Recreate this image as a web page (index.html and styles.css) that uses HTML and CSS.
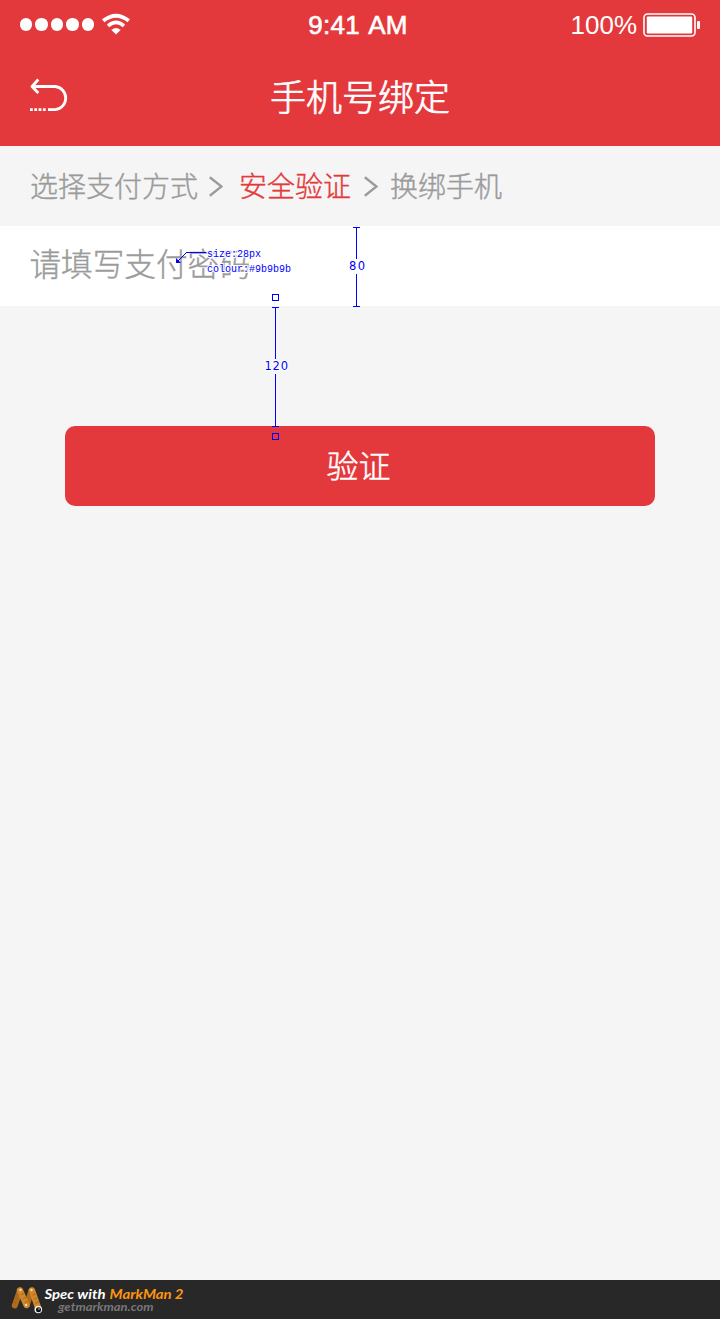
FILE: index.html
```html
<!DOCTYPE html>
<html lang="zh-CN">
<head>
<meta charset="utf-8">
<title>手机号绑定</title>
<link rel="stylesheet" href="styles.css">
</head>
<body>
<div class="screen">
  <header class="header">
    <div class="status">
      <div class="signal">
        <i class="dot"></i><i class="dot"></i><i class="dot"></i><i class="dot"></i><i class="dot"></i>
        <svg class="wifi" width="30" height="22" viewBox="0 0 30 22">
          <path d="M2.2 7.8Q15-2.4 27.8 7.8" fill="none" stroke="#fff" stroke-width="3.8"/>
          <path d="M7 12.8Q15 6.1 23 12.8" fill="none" stroke="#fff" stroke-width="3.6"/>
          <path d="M10.4 17Q15 13 19.6 17L15 21.500Z" fill="#fff"/>
        </svg>
      </div>
      <div class="clock">9:41 AM</div>
      <div class="power">
        <span class="percent">100%</span>
        <svg width="58" height="24" viewBox="0 0 58 24">
          <rect x="1" y="1" width="51" height="22" rx="3.5" fill="none" stroke="#fff" stroke-width="1.6"/>
          <rect x="3.8" y="3.6" width="45.4" height="16.8" rx="1" fill="#fff"/>
          <rect x="54" y="8" width="3" height="8" rx="1" fill="#fff"/>
        </svg>
      </div>
    </div>
    <nav class="navbar">
      <svg class="back" width="40" height="34" viewBox="0 0 40 34" fill="none" stroke="#fff" stroke-width="2.8">
        <path d="M8.3 1.5L2 8.5L8.3 15M2 8.5H25.200A11.6 11.6 0 0 1 25.200 31.6H18" stroke-linejoin="round"/>
        <path d="M0 31.6H17" stroke-dasharray="2.8 1.5"/>
      </svg>
      <h1 class="title">手机号绑定</h1>
    </nav>
  </header>
  <div class="steps">
    <span class="step">选择支付方式</span>
    <svg class="sep" width="14" height="21" viewBox="0 0 14 21"><path d="M.8 1.3L12.500 10.5L.8 19.7"/></svg>
    <span class="step current">安全验证</span>
    <svg class="sep late" width="14" height="21" viewBox="0 0 14 21"><path d="M.8 1.3L12.500 10.5L.8 19.7"/></svg>
    <span class="step">换绑手机</span>
  </div>
  <div class="field">请填写支付密码</div>
  <main class="content"><button class="submit">验证</button></main>
  <footer class="footer">
    <svg width="34" height="30" viewBox="0 0 34 30" fill="none" stroke-linecap="round">
      <path d="M4.800 20.500L10 5.500M17 19.500L21.500 5.500" stroke="#b06c1c" stroke-width="6"/>
      <path d="M10 5.500L16.500 20M22 5.500L28 22.500" stroke="#d0872b" stroke-width="6.4"/>
      <path d="M3.500 17L6 18M5 13L7.500 14M6.500 9L9 10M11.500 9.500L14 8.500M13.500 13.500L16 12.500M15 17.500L17.500 16.500M23 10L25.500 9M24.500 14L27 13M26 18L28.500 17" stroke="#9c5d18" stroke-width=".8"/>
      <circle cx="10.500" cy="5" r="1.2" fill="#ffe0a0"/><circle cx="21.500" cy="5" r="1.2" fill="#ffe0a0"/><circle cx="16" cy="20" r="1.2" fill="#ffe0a0"/>
      <circle cx="28.300" cy="24.500" r="3.8" fill="#eee"/><circle cx="28.500" cy="24.800" r="2.5" fill="#111"/><circle cx="29" cy="24" r=".7" fill="#fff"/>
    </svg>
    <div class="credit">
      <div class="brand"><svg width="140" height="15"><text x="0.500" y="12.500" textLength="61" lengthAdjust="spacingAndGlyphs" fill="#fff">Spec with</text><text x="65.500" y="12.500" textLength="74" lengthAdjust="spacingAndGlyphs" fill="#ff9410">MarkMan 2</text></svg></div>
      <div class="site"><svg width="110" height="13"><text x="0" y="10.500" textLength="95.500" lengthAdjust="spacingAndGlyphs" fill="#777">getmarkman.com</text></svg></div>
    </div>
  </footer>
  <svg class="marks" width="720" height="520" viewBox="0 0 720 520">
    <g fill="none" stroke="#00f" shape-rendering="crispEdges">
      <path d="M353 227.5H360M356.5 227V259M356.5 274V306M353 306.5H360"/>
      <path d="M272 307.5H279M275.5 307V359M275.5 374V427M272 426.5H279"/>
      <path d="M186 252.5H206"/>
      <rect x="272.5" y="294.5" width="6" height="6"/>
      <rect x="272.5" y="433.5" width="6" height="6"/>
    </g>
    <path d="M186.500 252.500L178 261" stroke="#00f"/>
    <path d="M176 258V263H181Z" fill="#00f"/>
    <g class="measure"><text x="349" y="270" textLength="16">80</text><text x="264.500" y="370" textLength="23.500">120</text></g>
    <g class="note"><text x="207" y="257">size:28px</text><text x="207" y="272">colour:#9b9b9b</text></g>
  </svg>
</div>
</body>
</html>
```
FILE: styles.css
```css
* { box-sizing: border-box; }
body { margin: 0; }
.screen {
  position: relative;
  display: flex;
  flex-direction: column;
  width: 720px;
  height: 1319px;
  overflow: hidden;
  background: #f5f5f5;
  font-family: "Noto Sans CJK SC", sans-serif;
  font-weight: 300;
}
.header { height: 146px; background: #e4393c; color: #fff; }
.status {
  display: grid;
  grid-template-columns: 1fr auto 1fr;
  align-items: center;
  height: 50px;
  padding: 0 19px 0 20px;
  font-family: "Liberation Sans", Arial, sans-serif;
  font-size: 26px;
}
.signal { display: flex; align-items: center; gap: 3px; padding-bottom: 1px; }
.dot { width: 12.4px; height: 12.4px; border-radius: 50%; background: #fff; }
.wifi { margin: 0 0 2px 4px; }
.clock { font-size: 26px; letter-spacing: .3px; word-spacing: 2px; margin-right: 5px; -webkit-text-stroke: .6px #fff; }
.power { display: flex; align-items: center; justify-content: flex-end; gap: 6px; }
.navbar {
  display: grid;
  grid-template-columns: 1fr auto 1fr;
  align-items: center;
  height: 96px;
  padding: 0 30px;
}
.back { margin-bottom: 7px; }
.title { margin: 0 0 7px; font-size: 36px; line-height: 50px; font-weight: 300; -webkit-text-stroke: .7px #fff; }
.steps {
  display: flex;
  align-items: center;
  height: 80px;
  padding-left: 30px;
  color: #9b9b9b;
  font-size: 28px;
}
.step { padding-bottom: 2px; -webkit-text-stroke: .4px currentColor; }
.sep { margin: 1px 16px 0 11px; fill: none; stroke: #9b9b9b; stroke-width: 2.4; }
.late { margin: 1px 12px 0 13px; }
.current { color: #e4393c; }
.field {
  height: 80px;
  padding-left: 29.5px;
  background: #fff;
  color: #9b9b9b;
  font-size: 31.6px;
  line-height: 73px;
  -webkit-text-stroke: .4px currentColor;
}
.content { flex: 1; padding: 120px 65px 0; }
.submit {
  display: block;
  width: 100%;
  height: 80px;
  padding: 0 3px 3px 0;
  border: 0;
  border-radius: 10px;
  background: #e4393c;
  color: #fff;
  font: 300 32px/77px "Noto Sans CJK SC", sans-serif;
  -webkit-text-stroke: .5px #fff;
}
.footer {
  display: flex;
  height: 39px;
  padding: 5px 0 0 10px;
  background: #282828;
}
.credit { padding-top: 1px; font: italic bold 14px Lato, sans-serif; }
.credit svg { display: block; overflow: visible; }
.site { padding: 0 0 0 14px; margin-top: -1px; font-size: 12px; }
.marks { position: absolute; left: 0; top: 0; }
.marks text { fill: #00f; stroke: #fff; stroke-width: 2px; paint-order: stroke; }
.measure { font: 11.5px "DejaVu Sans", sans-serif; }
.note { font: 10px "Liberation Mono", monospace; }
```
